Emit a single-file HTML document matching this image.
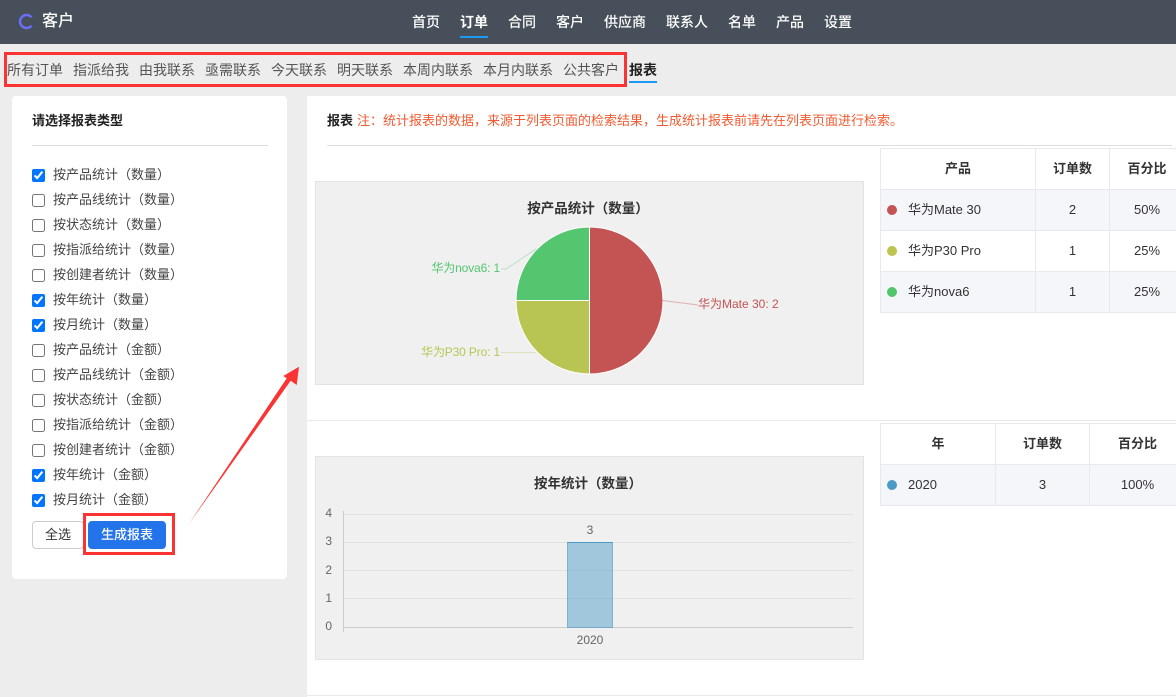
<!DOCTYPE html>
<html lang="zh"><head><meta charset="utf-8"><title>报表</title>
<style>
html,body{margin:0;padding:0}
body{width:1176px;height:697px;overflow:hidden;position:relative;background:#ededed;font-family:"Liberation Sans","Noto Sans CJK SC",sans-serif;color:#333}
.a{position:absolute;white-space:nowrap}
.nav{top:12px;font-size:14px;color:#fff;font-weight:500;line-height:20px}
.sub{top:60px;font-size:14px;color:#555;line-height:20px}
.cb{left:32px;width:13px;height:13px;margin:0;accent-color:#0075ff}
.lb{left:53px;font-size:13px;color:#444;line-height:18px}
.box{background:#f0f0f0;border:1px solid #e3e3e3;box-sizing:border-box;left:315px;width:549px}
table{position:absolute;left:880px;border-collapse:collapse;table-layout:fixed;font-size:13px;color:#333}
td,th{border:1px solid #e7e8f0;padding:0 0 4px 0;text-align:center;height:41px;box-sizing:border-box;font-weight:700}
td{font-weight:400;padding-bottom:2px}
tr.o td{background:#f5f6fa}
td.n{text-align:left;position:relative;padding:0 0 4px 27px}
td.n i{position:absolute;left:6px;top:15px;width:10px;height:10px;border-radius:50%}
svg{position:absolute;left:0;top:0}
svg text{font-family:"Liberation Sans","Noto Sans CJK SC",sans-serif}
</style></head><body>
<div class="a" style="left:0;top:0;width:1176px;height:44px;background:#464f5a"></div>
<svg width="1176" height="697" style="z-index:1">
<path d="M31.500 17.300A6.500 6.500 0 1 0 31.500 25.700" fill="none" stroke="#6a6ef0" stroke-width="2.600"/>
</svg>
<div class="a" style="left:42px;top:12px;font-size:16px;line-height:20px;color:#fff;font-weight:500;z-index:2">客户</div>
<div class="a nav" style="left:412px">首页</div>
<div class="a nav" style="left:460px;font-weight:700">订单</div>
<div class="a" style="left:460px;top:36px;width:28px;height:2px;background:#1b9af2"></div>
<div class="a nav" style="left:508px">合同</div>
<div class="a nav" style="left:556px">客户</div>
<div class="a nav" style="left:604px">供应商</div>
<div class="a nav" style="left:666px">联系人</div>
<div class="a nav" style="left:728px">名单</div>
<div class="a nav" style="left:776px">产品</div>
<div class="a nav" style="left:824px">设置</div>

<div class="a sub" style="left:7px">所有订单</div>
<div class="a sub" style="left:73px">指派给我</div>
<div class="a sub" style="left:139px">由我联系</div>
<div class="a sub" style="left:205px">亟需联系</div>
<div class="a sub" style="left:271px">今天联系</div>
<div class="a sub" style="left:337px">明天联系</div>
<div class="a sub" style="left:403px">本周内联系</div>
<div class="a sub" style="left:483px">本月内联系</div>
<div class="a sub" style="left:563px">公共客户</div>
<div class="a sub" style="left:629px;color:#222;font-weight:700">报表</div>
<div class="a" style="left:629px;top:81px;width:28px;height:2px;background:#1b9af2"></div>

<div class="a" style="left:12px;top:96px;width:275px;height:483px;background:#fff;border-radius:4px"></div>
<div class="a" style="left:32px;top:112px;font-size:13px;font-weight:700;color:#222;line-height:18px">请选择报表类型</div>
<div class="a" style="left:32px;top:145px;width:236px;height:1px;background:#dcdde2"></div>

<input type="checkbox" class="a cb" style="top:169px" checked><div class="a lb" style="top:166px">按产品统计（数量）</div>
<input type="checkbox" class="a cb" style="top:194px"><div class="a lb" style="top:191px">按产品线统计（数量）</div>
<input type="checkbox" class="a cb" style="top:219px"><div class="a lb" style="top:216px">按状态统计（数量）</div>
<input type="checkbox" class="a cb" style="top:244px"><div class="a lb" style="top:241px">按指派给统计（数量）</div>
<input type="checkbox" class="a cb" style="top:269px"><div class="a lb" style="top:266px">按创建者统计（数量）</div>
<input type="checkbox" class="a cb" style="top:294px" checked><div class="a lb" style="top:291px">按年统计（数量）</div>
<input type="checkbox" class="a cb" style="top:319px" checked><div class="a lb" style="top:316px">按月统计（数量）</div>
<input type="checkbox" class="a cb" style="top:344px"><div class="a lb" style="top:341px">按产品统计（金额）</div>
<input type="checkbox" class="a cb" style="top:369px"><div class="a lb" style="top:366px">按产品线统计（金额）</div>
<input type="checkbox" class="a cb" style="top:394px"><div class="a lb" style="top:391px">按状态统计（金额）</div>
<input type="checkbox" class="a cb" style="top:419px"><div class="a lb" style="top:416px">按指派给统计（金额）</div>
<input type="checkbox" class="a cb" style="top:444px"><div class="a lb" style="top:441px">按创建者统计（金额）</div>
<input type="checkbox" class="a cb" style="top:469px" checked><div class="a lb" style="top:466px">按年统计（金额）</div>
<input type="checkbox" class="a cb" style="top:494px" checked><div class="a lb" style="top:491px">按月统计（金额）</div>

<div class="a" style="left:32px;top:521px;width:52px;height:28px;box-sizing:border-box;border:1px solid #ccc;border-radius:4px;background:#fff;font-size:13px;line-height:26px;text-align:center;color:#333">全选</div>
<div class="a" style="left:88px;top:521px;width:78px;height:28px;border-radius:4px;background:#2374ea;font-size:13px;line-height:28px;text-align:center;color:#fff;font-weight:500">生成报表</div>

<div class="a" style="left:307px;top:96px;width:869px;height:601px;background:#fff"></div>
<div class="a" style="left:327px;top:112px;font-size:13px;line-height:18px;font-weight:700;color:#222">报表</div>
<div class="a" style="left:357px;top:112px;font-size:13px;line-height:18px;color:#f05a30">注：统计报表的数据，来源于列表页面的检索结果，生成统计报表前请先在列表页面进行检索。</div>
<div class="a" style="left:327px;top:145px;width:845px;height:1px;background:#dcdde2"></div>
<div class="a" style="left:307px;top:420px;width:869px;height:1px;background:#e7e8f0"></div>
<div class="a" style="left:307px;top:695px;width:869px;height:1px;background:#e7e8f0"></div>

<div class="a box" style="top:181px;height:204px"></div>
<div class="a box" style="top:456px;height:204px"></div>

<table style="top:148px;width:304px"><colgroup><col style="width:155px"><col style="width:74px"><col style="width:75px"></colgroup>
<tr><th>产品</th><th>订单数</th><th>百分比</th></tr>
<tr class="o"><td class="n"><i style="background:#c45353"></i>华为Mate 30</td><td>2</td><td>50%</td></tr>
<tr><td class="n"><i style="background:#bcc44f"></i>华为P30 Pro</td><td>1</td><td>25%</td></tr>
<tr class="o"><td class="n"><i style="background:#52c66d"></i>华为nova6</td><td>1</td><td>25%</td></tr>
</table>
<table style="top:423px;width:305px"><colgroup><col style="width:115px"><col style="width:94px"><col style="width:96px"></colgroup>
<tr><th>年</th><th>订单数</th><th>百分比</th></tr>
<tr class="o"><td class="n" style="padding-bottom:2px"><i style="background:#4c9ac6"></i>2020</td><td>3</td><td>100%</td></tr>
</table>

<svg width="1176" height="697" style="z-index:3">
<text x="588" y="213" font-size="13.500" font-weight="700" fill="#333" text-anchor="middle">按产品统计（数量）</text>
<path d="M589.500 300.500V227A73.500 73.500 0 0 1 589.500 374Z" fill="#c45353" stroke="#fff" stroke-width="1"/>
<path d="M589.500 300.500V374A73.500 73.500 0 0 1 516 300.500Z" fill="#b9c552" stroke="#fff" stroke-width="1"/>
<path d="M589.500 300.500H516A73.500 73.500 0 0 1 589.500 227Z" fill="#53c66f" stroke="#fff" stroke-width="1"/>
<path d="M662.500 300.500L698 305" fill="none" stroke="#c45353" stroke-opacity=".4"/>
<path d="M536 249L506 269H501" fill="none" stroke="#53c66f" stroke-opacity=".35"/>
<path d="M536 352.500H501" fill="none" stroke="#b9c552" stroke-opacity=".35"/>
<text x="698" y="308" font-size="12" fill="#c45353">华为Mate 30: 2</text>
<text x="500" y="272" font-size="12" letter-spacing="-.15" fill="#53c66f" text-anchor="end">华为nova6: 1</text>
<text x="500" y="356" font-size="12" letter-spacing="-.15" fill="#b9c552" text-anchor="end">华为P30 Pro: 1</text>

<text x="588" y="488" font-size="13.500" font-weight="700" fill="#333" text-anchor="middle">按年统计（数量）</text>
<g stroke="#e2e2e2"><path d="M343 514.500H853M343 542.500H853M343 570.500H853M343 598.500H853"/></g>
<path d="M343.500 511V632M343 627.500H853" stroke="#ccc" fill="none"/>
<rect x="567.500" y="542.500" width="45" height="85" fill="#4c9ac6" fill-opacity=".48" stroke="#4c9ac6" stroke-opacity=".6"/>
<path d="M567 542.500H613" stroke="#4c9ac6"/>
<g font-size="12" fill="#666">
<text x="332" y="517" text-anchor="end">4</text>
<text x="332" y="545" text-anchor="end">3</text>
<text x="332" y="574" text-anchor="end">2</text>
<text x="332" y="602" text-anchor="end">1</text>
<text x="332" y="630" text-anchor="end">0</text>
<text x="590" y="534" text-anchor="middle">3</text>
<text x="590" y="644" text-anchor="middle">2020</text>
</g>

<rect x="5.500" y="53.500" width="620" height="32" fill="none" stroke="#fb3333" stroke-width="3"/>
<rect x="84.500" y="514.500" width="89" height="39" fill="none" stroke="#fb3333" stroke-width="3"/>
<path d="M188.500 524.500L286.700 378.300L283.300 376L299 366.700L296.700 385L290.700 380.700Z" fill="#fb3333"/>
</svg>
</body></html>
